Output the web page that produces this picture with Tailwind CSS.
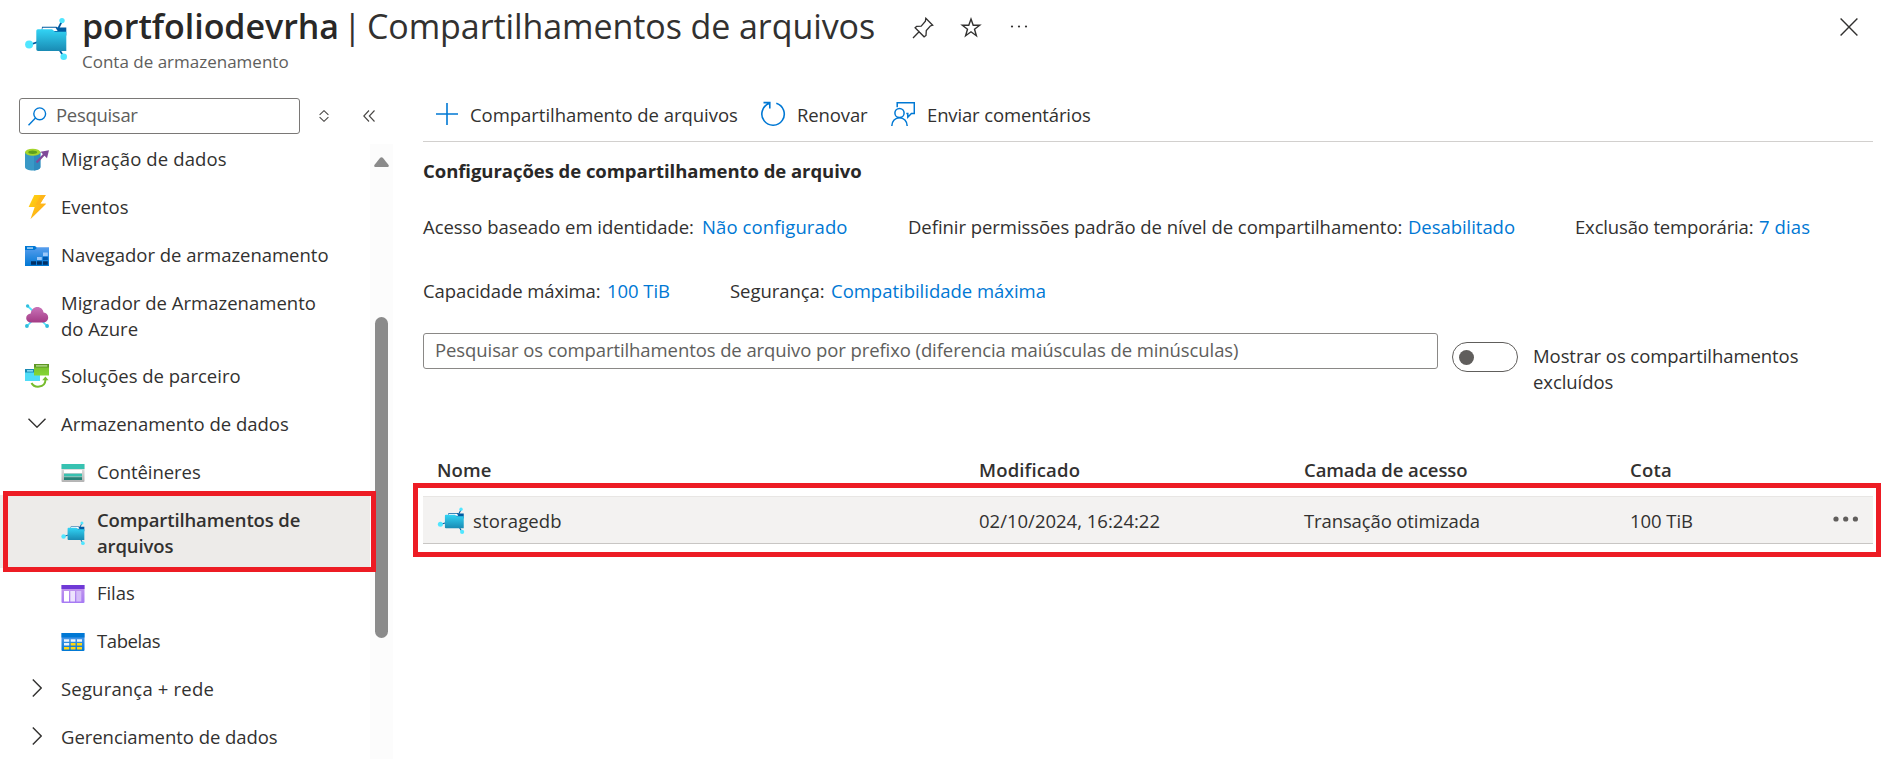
<!DOCTYPE html>
<html lang="pt">
<head>
<meta charset="utf-8">
<title>portfoliodevrha</title>
<script src="https://cdn.jsdelivr.net/npm/@tailwindcss/browser@4"></script>
</head>
<body class="relative w-[1883px] h-[759px] overflow-hidden bg-white font-['Open_Sans','Noto_Sans',sans-serif] text-[18.5px] leading-[26px] tracking-[-0.05px] text-[#323130]">

<svg class="absolute size-0">
  <defs>
    <linearGradient id="gf" x1="0" y1="0" x2="0" y2="1"><stop offset="0" stop-color="#32d4f5"/><stop offset="1" stop-color="#198ab3"/></linearGradient>
    <linearGradient id="gb" x1="0" y1="0" x2="0" y2="1"><stop offset="0" stop-color="#5ea0ef"/><stop offset="1" stop-color="#0078d4"/></linearGradient>
    <linearGradient id="gp" x1="0" y1="0" x2="0" y2="1"><stop offset="0" stop-color="#c973b8"/><stop offset="1" stop-color="#a33a85"/></linearGradient>
    <linearGradient id="gy" x1="0" y1="0" x2="1" y2="1"><stop offset="0" stop-color="#ffd70f"/><stop offset="1" stop-color="#fea11b"/></linearGradient>
    <linearGradient id="gv" x1="0" y1="0" x2="0" y2="1"><stop offset="0" stop-color="#c69aeb"/><stop offset="1" stop-color="#a67af4"/></linearGradient>
    <linearGradient id="gg" x1="0" y1="0" x2="0" y2="1"><stop offset="0" stop-color="#eeeeee"/><stop offset="1" stop-color="#b3b3b3"/></linearGradient>
    <linearGradient id="gn" x1="0" y1="0" x2="0" y2="1"><stop offset="0" stop-color="#76bc2d"/><stop offset="1" stop-color="#86d633"/></linearGradient>
    <symbol id="share" viewBox="0 0 42 43">
      <path d="M37 4l-4 8M4 28l10-3.4M38.5 39.5L34 32" stroke="#005ba1" stroke-width="1.7"/>
      <path d="M17 9.7h14.5l1.2 0.8h8.600v8H16z" fill="#005ba1"/>
      <path d="M17.600 10.800h13l2 3.200h-15.500z" fill="#fff"/>
      <path d="M11.300 13.800q0-1.600 1.600-1.600h14.200l2.800 2.600h11.400V34H13q-1.700 0-1.700-1.700z" fill="url(#gf)"/>
      <circle cx="37" cy="3.600" r="2.700" fill="#50e6ff"/><circle cx="4.100" cy="27.600" r="4" fill="#50e6ff"/><circle cx="38.700" cy="39.700" r="3.300" fill="#50e6ff"/>
    </symbol>
  </defs>
</svg>

<header class="flex h-[98px] items-start">
  <svg class="mt-[17px] ml-[25px] h-[43px] w-[42px] shrink-0"><use href="#share"/></svg>
  <div class="ml-[15px] w-[830px] shrink-0">
    <h1 class="mt-[3px] flex h-[46px] items-center whitespace-nowrap text-[34px] leading-[46px]"><span class="w-[261px] font-semibold text-[#292827]">portfoliodevrha</span><span class="w-[24px]">|</span><span class="tracking-[-0.08px]">Compartilhamentos de arquivos</span></h1>
    <p class="mt-[1px] text-[17px] leading-6 tracking-[0px] text-[#605e5c]">Conta de armazenamento</p>
  </div>
  <svg class="mt-[17px] size-[22px] shrink-0" viewBox="0 0 22 22" fill="none" stroke="#323130" stroke-width="1.3"><path d="M1 21l6.600-6.800M13.800 1.300l6.900 6.900-2.400.800-4 4.600-.300 4.900-1.900 1.300-9-9.100 1.500-1.300 4.600-.200 4.200-5z" stroke-linejoin="miter"/></svg>
  <svg class="mt-[16px] ml-[26px] size-[22px] shrink-0" viewBox="0 0 22 22" fill="none" stroke="#323130" stroke-width="1.400"><path d="M11 3l2.200 6.200h6.500l-5.200 4 1.900 6.600-5.400-4-5.400 4 1.900-6.600-5.200-4h6.500z"/></svg>
  <svg class="mt-[24px] ml-[28px] h-[5px] w-[18px] shrink-0" fill="#323130"><circle cx="2" cy="2.500" r="1.100"/><circle cx="9" cy="2.500" r="1.100"/><circle cx="16" cy="2.500" r="1.100"/></svg>
  <svg class="mt-[18px] mr-[25px] ml-auto size-[18px] shrink-0" viewBox="0 0 18 18" stroke="#323130" stroke-width="1.400"><path d="M.600.600l16.800 16.800M17.400.600L.600 17.400"/></svg>
</header>

<div class="flex h-[661px]">
  <aside class="w-[393px] shrink-0">
    <div class="flex h-9 items-center pl-[19px]">
      <div class="flex h-9 w-[281px] items-center rounded-[3px] border border-[#7a7876] pl-2 text-[#605e5c]">
        <svg class="size-[19px]" viewBox="0 0 19 19" fill="none" stroke="#0078d4" stroke-width="1.400"><circle cx="11.700" cy="6.800" r="5.900"/><path d="M7.500 11L.500 18.300"/></svg>
        <span class="mb-[2px] ml-[9px] tracking-[-0.300px]">Pesquisar</span>
      </div>
      <svg class="ml-[19px] h-[12px] w-[10px]" viewBox="0 0 10 12" fill="none" stroke="#484644" stroke-width="1.100"><path d="M.600 4.800L5 .700l4.400 4.100M.600 7.200L5 11.300l4.400-4.100"/></svg>
      <svg class="ml-[34px] h-[12px] w-[12px]" viewBox="0 0 12 12" fill="none" stroke="#484644" stroke-width="1.100"><path d="M6 .500L.800 6 6 11.500M11.500.500L6.300 6l5.200 5.500"/></svg>
    </div>
    <div class="flex">
      <nav class="w-[370px]">
        <div class="flex h-12 items-center pl-[25px]">
          <svg class="mt-1 size-6" viewBox="0 0 24 24"><path d="M0 4v15c0 2 3.500 3.500 7.700 3.500s7.700-1.500 7.700-3.500V4z" fill="#3999c6"/><path d="M9 4h6.400v15c0 2-2.500 3-6.400 3.500z" fill="#2f8abd"/><ellipse cx="7.700" cy="4.200" rx="7.700" ry="3.500" fill="#a4d52c"/><ellipse cx="7.700" cy="4.300" rx="4.400" ry="1.700" fill="#5d9f1e"/><path d="M11.500 14.500l9-9.500" stroke="#804998" stroke-width="2.300"/><path d="M15.500 3.800L24 2.200l-2 8z" fill="#804998"/></svg>
          <span class="mt-[2px] ml-[12px] tracking-[0.120px]">Migração de dados</span></div>
        <div class="flex h-12 items-center pl-[25px]">
          <svg class="mt-[2px] size-6" viewBox="0 0 24 24"><path d="M9.300 0H20.700l-5.500 8.800H21L5.500 24l4.200-12H3.600z" fill="url(#gy)"/><path d="M20.700 0l-5.500 8.800H21L5.500 24 18 10h-7.500L16 0z" fill="#ffb51a"/></svg>
          <span class="mt-[2px] ml-[12px]">Eventos</span></div>
        <div class="flex h-12 items-center pl-[25px]">
          <svg class="mt-1 h-5 w-6" viewBox="0 0 24 20"><path d="M0 0h9.500q1.500 0 2 1.300H24V20H0z" fill="url(#gb)"/><path d="M0 0h9.500l2.300 2L9.500 4H0z" fill="#0078d4"/><path d="M2 1.400h6v1.300H2z" fill="#cfe5fb"/><path d="M18 6.500h4.800V10H18zM12 11h4.800v3H12z" fill="#9cc8f9"/><path d="M18 11h4.800v3H18z" fill="#0058ad"/><path d="M6 15.300h5v3.500H6zM12 15.300h4.800v3.500H12zM18 15.300h4.800v3.500H18z" fill="#003067"/></svg>
          <span class="mt-[2px] ml-[12px] tracking-[-0.020px]">Navegador de armazenamento</span></div>
        <div class="flex h-[73px] items-center pl-[25px]">
          <svg class="mt-[3px] size-6" viewBox="0 0 24 24"><path d="M2.500 2L8 7M2 22l6-6M22 22l-6-6" stroke="#50e6ff" stroke-width="1.700"/><circle cx="2.600" cy="2" r="1.700" fill="#32bedd"/><circle cx="1.900" cy="22" r="1.900" fill="#32bedd"/><circle cx="22.100" cy="22" r="1.900" fill="#32bedd"/><path d="M6.300 18.500C3.300 18.500 1.200 16.500 1.200 14c0-2.600 1.900-4.300 4.500-4.600C6.300 5.500 9 3 12.300 3c3.400 0 5.800 2.300 6.300 5.600 2.700.300 4.600 2.200 4.600 4.900 0 2.800-2.200 5-5 5z" fill="url(#gp)"/></svg>
          <span class="mt-[2px] ml-[12px] tracking-[0.020px] whitespace-nowrap">Migrador de Armazenamento<br>do Azure</span></div>
        <div class="flex h-12 items-center pl-[25px]">
          <svg class="mt-[2px] size-6" viewBox="0 0 24 24"><path d="M0 5h9v6h6v6H0z" fill="#4fdcf7"/><path d="M0 5h9v3.500H0z" fill="#198ab3"/><path d="M2 6.200h6v1.300H2z" fill="#9cebff"/><path d="M9 0h15v11.500H9z" fill="url(#gn)"/><path d="M9 0h15v3.500H9z" fill="#5e9624"/><path d="M11 1.300h11.300v1.200H11z" fill="#c3e89f"/><path d="M6.500 19c2.500 5 13.500 5.500 14-3" fill="none" stroke="#76bc2d" stroke-width="2"/><path d="M17.200 16.300l3.200-3.800 3.200 3.800z" fill="#76bc2d"/></svg>
          <span class="mt-[2px] ml-[12px] tracking-[0px]">Soluções de parceiro</span></div>
        <div class="flex h-12 items-center pl-[28px]">
          <svg class="h-[10px] w-[18px]" viewBox="0 0 18 10" fill="none" stroke="#323130" stroke-width="1.400"><path d="M.500.800L9 9.200 17.500.800"/></svg>
          <span class="mt-[2px] ml-[15px] tracking-[-0.020px]">Armazenamento de dados</span></div>
        <div class="flex h-12 items-center pl-[61px]">
          <svg class="mt-[3px] h-[18px] w-6" viewBox="0 0 24 18"><path d="M.500 0h23v17a1 1 0 01-1 1h-21a1 1 0 01-1-1z" fill="url(#gg)"/><path d="M.500 0h23v5H.500z" fill="#37c2b1"/><path d="M3 6h18v3H3z" fill="#fff"/><path d="M3 9.700h18v2.800H3z" fill="#37c2b1"/><path d="M3 13.200h18V16H3z" fill="#258277"/></svg>
          <span class="mt-[2px] ml-[12px]">Contêineres</span></div>
        <div class="flex h-[73px] items-center bg-[#edebe9] pl-[61px]">
          <svg class="mt-[3px] h-6 w-6"><use href="#share"/></svg>
          <span class="mt-[2px] ml-[12px] font-semibold tracking-[-0.120px] whitespace-nowrap">Compartilhamentos de<br>arquivos</span></div>
        <div class="flex h-12 items-center pl-[61px]">
          <svg class="mt-[3px] h-[18px] w-6" viewBox="0 0 24 18"><path d="M.500 0h23v17a1 1 0 01-1 1h-21a1 1 0 01-1-1z" fill="url(#gv)"/><path d="M.500 0h23v4H.500z" fill="#6f39d6"/><path d="M3 6h5v10.500H3z" fill="#fff"/><path d="M9.300 6h4.700v10.500H9.300z" fill="#ede3fd"/><path d="M15.300 6h5v10.500h-5z" fill="#d5bdf8"/></svg>
          <span class="mt-[2px] ml-[12px]">Filas</span></div>
        <div class="flex h-12 items-center pl-[61px]">
          <svg class="mt-[3px] h-[18px] w-6" viewBox="0 0 24 18"><path d="M.500 0h23v17a1 1 0 01-1 1h-21a1 1 0 01-1-1z" fill="url(#gb)"/><path d="M.500 0h23v4.500H.500z" fill="#0078d4"/><path d="M3 6.200h5.200v2.500H3zM9.700 6.200h4.800v2.500H9.700zM16 6.200h5v2.500h-5zM3 10h5.200v2.500H3z" fill="#e9f3fd"/><path d="M9.700 10h4.800v2.500H9.700zM16 10h5v2.500h-5zM3 13.900h5.200v2.500H3zM9.700 13.900h4.800v2.500H9.700zM16 13.900h5v2.500h-5z" fill="#ffd70f"/></svg>
          <span class="mt-[2px] ml-[12px] tracking-[-0.400px]">Tabelas</span></div>
        <div class="flex h-12 items-center pl-[32px]">
          <svg class="h-[18px] w-[10px]" viewBox="0 0 10 18" fill="none" stroke="#323130" stroke-width="1.400"><path d="M.800.500L9.200 9 .800 17.500"/></svg>
          <span class="mt-[2px] ml-[19px] tracking-[0.180px]">Segurança + rede</span></div>
        <div class="flex h-12 items-center pl-[32px]">
          <svg class="h-[18px] w-[10px]" viewBox="0 0 10 18" fill="none" stroke="#323130" stroke-width="1.400"><path d="M.800.500L9.200 9 .800 17.500"/></svg>
          <span class="mt-[2px] ml-[19px]">Gerenciamento de dados</span></div>
      </nav>
      <div class="mt-[10px] flex h-[615px] w-[23px] flex-col items-center bg-[#fcfcfc] pt-[13px]">
        <svg class="h-[10px] w-[15px]" viewBox="0 0 15 10"><path d="M6.200.800q1.300-1.300 2.600 0L14.600 8q.600 2-.800 2H1.200Q-.200 10 .400 8z" fill="#8b8b8b"/></svg>
        <div class="mt-[150px] h-[321px] w-[13px] rounded-full bg-[#8b8b8b]"></div>
      </div>
    </div>
  </aside>

  <main class="ml-[30px] w-[1450px] whitespace-nowrap">
    <div class="flex h-[44px] items-start border-b border-[#d2d0ce]">
      <div class="flex h-8 w-[325px] items-center pl-[13px]"><svg class="size-[22px]" viewBox="0 0 22 22" stroke="#0078d4" stroke-width="1.600"><path d="M11 0v22M0 11h22"/></svg><span class="mt-[2px] ml-[12px] tracking-[-0.040px]">Compartilhamento de arquivos</span></div>
      <div class="flex h-8 w-[143px] items-center pl-[12px]"><svg class="size-[26px]" viewBox="0 0 26 26" fill="none" stroke="#0078d4" stroke-width="1.600"><path d="M9.200 2.500A11.200 11.200 0 1016.300 2.300M3.500 1.600h6.300v5.800"/></svg><span class="mt-[2px] ml-[11px] tracking-[-0.120px]">Renovar</span></div>
      <div class="flex h-8 items-center"><svg class="size-6" viewBox="0 0 24 24" fill="none" stroke="#0078d4" stroke-width="1.500"><path d="M6.200 5.300V.800h17.100v10.700h-2.900l-3.600 3.700v-3.700h-1.500"/><circle cx="8.500" cy="11" r="4.600"/><path d="M.800 24c0-5 3.500-8.300 7.700-8.300s7.700 3.300 7.700 8.300"/></svg><span class="mt-[2px] ml-[12px] tracking-[-0.140px]">Enviar comentários</span></div>
    </div>
    <h2 class="mt-[16px] font-bold text-[#292827]">Configurações de compartilhamento de arquivo</h2>
    <div class="mt-[30px] flex"><span class="w-[279px]">Acesso baseado em identidade:</span><a class="w-[206px] tracking-[0.100px] text-[#0078d4]">Não configurado</a><span class="w-[500px]">Definir permissões padrão de nível de compartilhamento:</span><a class="w-[167px] text-[#0078d4]">Desabilitado</a><span class="w-[184px] tracking-[-0.160px]">Exclusão temporária:</span><a class="tracking-[0.100px] text-[#0078d4]">7 dias</a></div>
    <div class="mt-[38px] flex"><span class="w-[184px] tracking-[-0.090px]">Capacidade máxima:</span><a class="w-[123px] text-[#0078d4]">100 TiB</a><span class="w-[101px]">Segurança:</span><a class="tracking-[-0.020px] text-[#0078d4]">Compatibilidade máxima</a></div>
    <div class="mt-[29px] flex items-start">
      <div class="flex h-9 w-[1015px] items-center rounded-[3px] border border-[#8a8886] pb-[2px] pl-[11px] tracking-[-0.090px] text-[#605e5c]">Pesquisar os compartilhamentos de arquivo por prefixo (diferencia maiúsculas de minúsculas)</div>
      <div class="mt-[9px] ml-[14px] flex h-[30px] w-[66px] items-center rounded-full border border-[#605e5c] pl-[6px]"><div class="size-[15px] rounded-full bg-[#605e5c]"></div></div>
      <div class="mt-[10px] ml-[15px] h-[52px] tracking-[-0.070px]">Mostrar os compartilhamentos<br>excluídos</div>
    </div>
    <div class="mt-[62px] grid h-[39px] grid-cols-[542px_325px_325px_1fr] pl-[14px] font-semibold text-[#323130]"><span class="tracking-[0.100px]">Nome</span><span class="tracking-[0.150px]">Modificado</span><span class="tracking-[-0.080px]">Camada de acesso</span><span class="ml-px tracking-[0.200px]">Cota</span></div>
    <div class="grid h-12 grid-cols-[542px_325px_325px_1fr_auto] items-center border-t border-b border-t-[#e8e6e4] border-b-[#c8c6c4] bg-[#f3f2f1] pl-[14px]"><span class="flex items-center"><svg class="h-[27px] w-[28px]"><use href="#share"/></svg><span class="mt-[1px] ml-[8px] tracking-[0.150px]">storagedb</span></span><span class="mt-[1px] tracking-[0px]">02/10/2024, 16:24:22</span><span class="mt-[1px] tracking-[-0.120px]">Transação otimizada</span><span class="mt-[1px] ml-px">100 TiB</span><svg class="mr-[14px] mb-[2px] h-[6px] w-[26px]" fill="#605e5c"><circle cx="3" cy="3" r="2.600"/><circle cx="12.700" cy="3" r="2.600"/><circle cx="22.400" cy="3" r="2.600"/></svg></div>
  </main>
</div>

<!-- highlight frames -->
<div class="absolute top-[491px] left-[3px] h-[81px] w-[373px] border-5 border-[#ed1c24]"></div>
<div class="absolute top-[483px] left-[413px] h-[74px] w-[1468px] border-5 border-[#ed1c24]"></div>
</body>
</html>
